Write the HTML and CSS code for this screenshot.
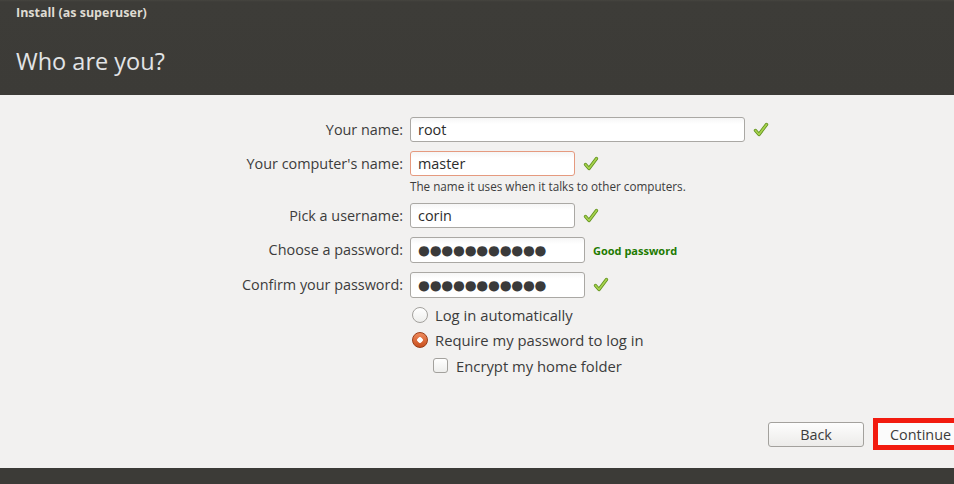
FILE: index.html
```html
<!DOCTYPE html>
<html>
<head>
<meta charset="utf-8">
<link rel="stylesheet" href="styles.css">
</head>
<body>
<div class="window">
  <header class="header">
    <div class="wintitle">Install (as superuser)</div>
    <h1 class="pagetitle">Who are you?</h1>
  </header>
  <main class="content">
    <div class="form">
      <label class="lbl">Your name:</label>
      <div class="field"><div class="input w-long">root</div><svg class="check" viewBox="0 0 16 16"><path d="M2.5 8.5 L6 12.5 L13.5 2.5" fill="none" stroke="#5f8f1c" stroke-width="3.4" stroke-linecap="round" stroke-linejoin="round"/><path d="M2.5 8.5 L6 12.5 L13.5 2.5" fill="none" stroke="#a6d24d" stroke-width="1.8" stroke-linecap="round" stroke-linejoin="round"/></svg></div>

      <label class="lbl">Your computer's name:</label>
      <div class="field field-stack">
        <div class="fieldrow"><div class="input w-short focus">master</div><svg class="check" viewBox="0 0 16 16"><path d="M2.5 8.5 L6 12.5 L13.5 2.5" fill="none" stroke="#5f8f1c" stroke-width="3.4" stroke-linecap="round" stroke-linejoin="round"/><path d="M2.5 8.5 L6 12.5 L13.5 2.5" fill="none" stroke="#a6d24d" stroke-width="1.8" stroke-linecap="round" stroke-linejoin="round"/></svg></div>
        <div class="hint">The name it uses when it talks to other computers.</div>
      </div>

      <label class="lbl">Pick a username:</label>
      <div class="field"><div class="input w-short">corin</div><svg class="check" viewBox="0 0 16 16"><path d="M2.5 8.5 L6 12.5 L13.5 2.5" fill="none" stroke="#5f8f1c" stroke-width="3.4" stroke-linecap="round" stroke-linejoin="round"/><path d="M2.5 8.5 L6 12.5 L13.5 2.5" fill="none" stroke="#a6d24d" stroke-width="1.8" stroke-linecap="round" stroke-linejoin="round"/></svg></div>

      <label class="lbl pwl">Choose a password:</label>
      <div class="field pwf"><div class="input w-mid pw">●●●●●●●●●●●</div><span class="good">Good password</span></div>

      <label class="lbl pwl">Confirm your password:</label>
      <div class="field pwf"><div class="input w-mid pw">●●●●●●●●●●●</div><svg class="check" viewBox="0 0 16 16"><path d="M2.5 8.5 L6 12.5 L13.5 2.5" fill="none" stroke="#5f8f1c" stroke-width="3.4" stroke-linecap="round" stroke-linejoin="round"/><path d="M2.5 8.5 L6 12.5 L13.5 2.5" fill="none" stroke="#a6d24d" stroke-width="1.8" stroke-linecap="round" stroke-linejoin="round"/></svg></div>

      <div></div>
      <div class="options">
        <div class="opt"><span class="radio"></span>Log in automatically</div>
        <div class="opt"><span class="radio on"></span>Require my password to log in</div>
        <div class="opt sub"><span class="checkbox"></span>Encrypt my home folder</div>
      </div>
    </div>
    <div class="buttons">
      <button class="btn back">Back</button>
      <button class="btn cont">Continue</button>
    </div>
  </main>
  <footer class="footer"></footer>
</div>
</body>
</html>
```
FILE: styles.css
```css
* { box-sizing: border-box; }
html, body { margin: 0; padding: 0; }
body {
  width: 954px;
  height: 484px;
  overflow: hidden;
  background: #f2f1f0;
  font-family: "Open Sans", "DejaVu Sans", sans-serif;
  color: #3c3c3c;
}
.window { display: flex; flex-direction: column; height: 484px; }
.header {
  height: 95px;
  background: linear-gradient(#46453f 0, #3d3c38 2px, #3c3b37 100%);
  padding: 3px 16px 0;
}
.wintitle {
  font-size: 12.5px;
  font-weight: 700;
  color: #dfdbd2;
  line-height: 20px;
}
.pagetitle {
  margin: 23px 0 0;
  font-size: 23.5px;
  font-weight: 400;
  color: #e2e4e6;
  line-height: 30px;
}
.content { flex: 1; display: flex; flex-direction: column; }
.form {
  display: grid;
  grid-template-columns: 403px 1fr;
  column-gap: 7px;
  row-gap: 9px;
  margin-top: 22px;
  font-size: 14.4px;
}
.lbl {
  text-align: right;
  line-height: 25px;
  height: 25px;
  color: #3c3c3c;
}
.lbl.pwl { height: 26px; line-height: 26px; }
.field { display: flex; align-items: center; height: 25px; }
.field.pwf { height: 26px; }
.field-stack { flex-direction: column; align-items: flex-start; height: auto; }
.fieldrow { display: flex; align-items: center; height: 25px; }
.input {
  height: 25px;
  border: 1px solid #aaa8a4;
  border-radius: 3px;
  background: linear-gradient(#f6f6f6, #ffffff 6px);
  padding: 0 7px;
  line-height: 23px;
  color: #2c2c2c;
  font-size: 14.4px;
}
.input.focus { border-color: #e59a7f; }
.w-long { width: 335px; }
.w-short { width: 165px; }
.w-mid { width: 175px; height: 26px; line-height: 24px; }
.pw { font-size: 13.6px; letter-spacing: -0.2px; color: #3a3a3a; padding-left: 7px; }
.check { width: 16px; height: 16px; margin-left: 8px; }
.hint { font-size: 11.7px; margin-top: 3px; color: #3c3c3c; line-height: 15px; }
.good { margin-left: 8px; font-size: 11px; font-weight: 700; color: #1d7a00; }
.options { display: flex; flex-direction: column; margin-top: -5px; }
.opt { display: flex; align-items: center; height: 25.5px; font-size: 14.8px; color: #3c3c3c; }
.opt.sub { padding-left: 23px; }
.radio {
  width: 16px; height: 16px; border-radius: 50%;
  border: 1px solid #a3a19d;
  background: linear-gradient(#ffffff, #eeeeec);
  margin: 0 7px 0 2px;
}
.radio.on {
  border-color: #9a3d17;
  background: radial-gradient(circle at 50% 50%, #ffffff 0 2.5px, transparent 3px), linear-gradient(#ef8a5c, #c9501f);
}
.checkbox {
  width: 15px; height: 15px; border-radius: 3px;
  border: 1px solid #a3a19d;
  background: linear-gradient(#ffffff, #eeeeec);
  margin-right: 8px;
}
.buttons {
  margin-top: auto;
  display: flex;
  padding-left: 768px;
  padding-bottom: 18px;
  gap: 9px;
  align-items: center;
}
.btn {
  font-family: inherit;
  font-size: 14.4px;
  color: #3c3c3c;
  height: 25px;
  border: 1px solid #a3a19d;
  border-radius: 3px;
  background: linear-gradient(#fdfdfd, #ecebe9);
  padding: 0;
  flex-shrink: 0;
}
.back { width: 96px; }
.cont {
  width: 110px;
  height: 32px;
  border: 5px solid #f21b0f;
  border-radius: 0;
  background: #fbfbfb;
  text-align: left;
  padding-left: 12px;
}
.footer { height: 16px; background: #3c3b37; }
```
